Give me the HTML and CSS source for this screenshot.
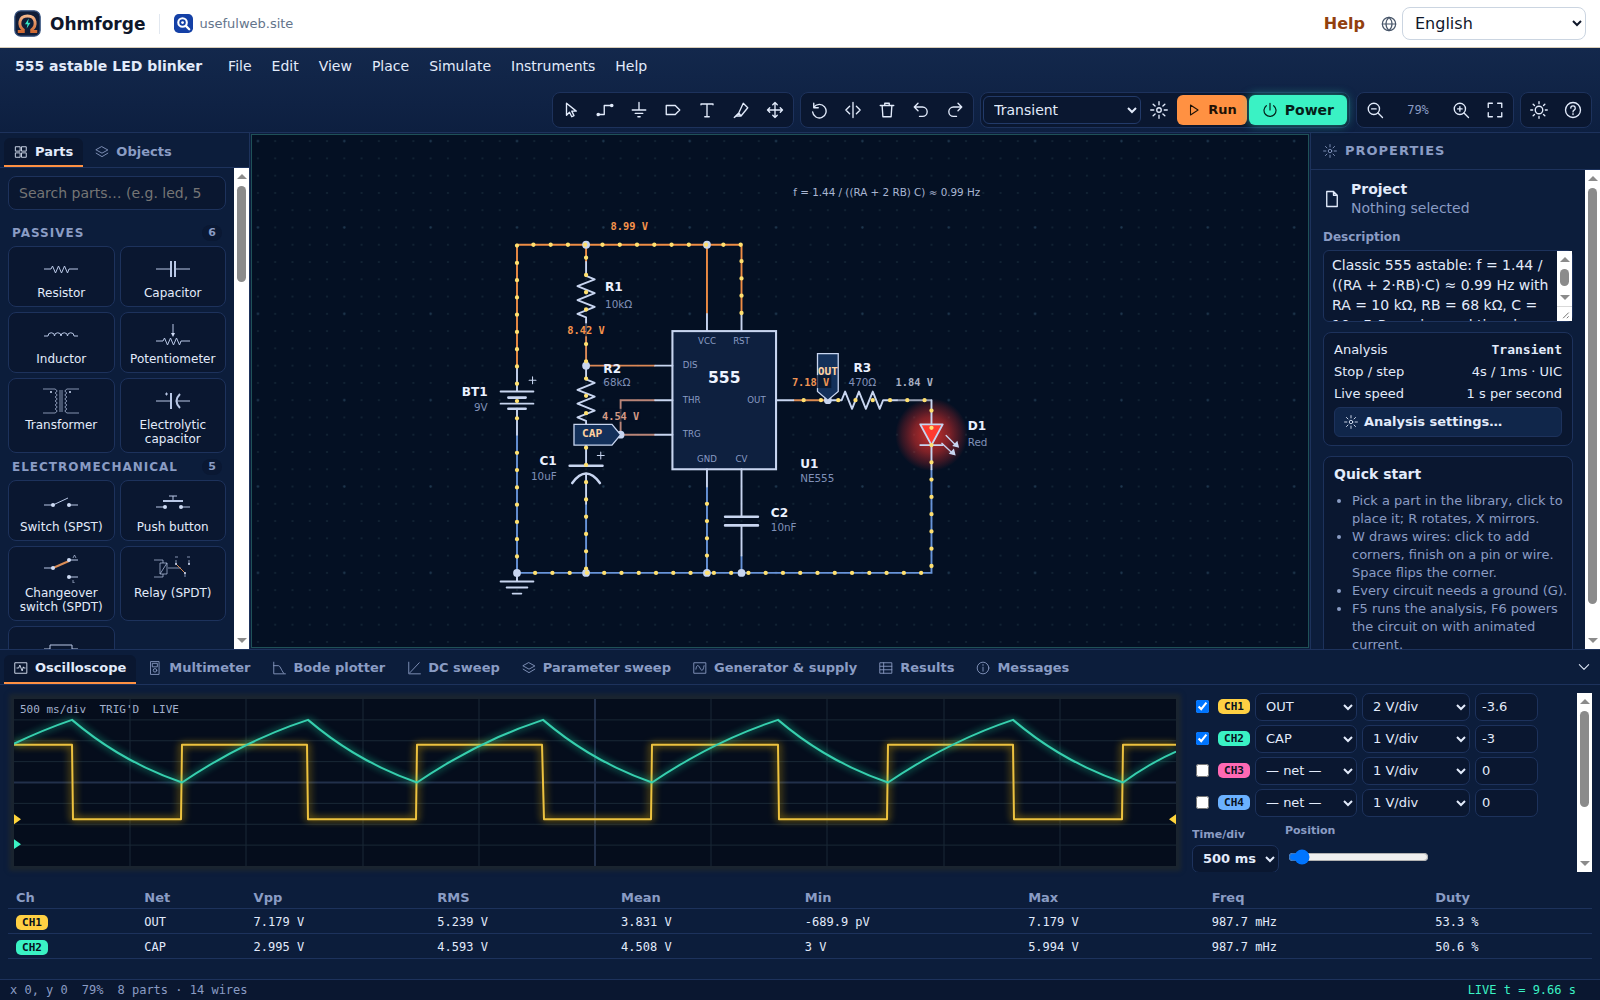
FILE: index.html
```html
<!DOCTYPE html>
<html lang="en">
<head>
<meta charset="utf-8">
<title>Ohmforge</title>
<meta name="viewport" content="width=device-width, initial-scale=1">
<link rel="stylesheet" href="styles.css">
</head>
<body>
<svg class="sprite" aria-hidden="true">
  <symbol id="i-cursor" viewBox="0 0 24 24"><path d="M6 3v16l4-4 3 6 3-1.500-3-6h6z"/></symbol>
  <symbol id="i-wire" viewBox="0 0 24 24"><path d="M3 18h8V6h10"/><circle cx="3" cy="18" r="1.500" class="solid"/><circle cx="21" cy="6" r="1.500" class="solid"/></symbol>
  <symbol id="i-ground" viewBox="0 0 24 24"><path d="M12 2v10M3 12h18M7 16.500h10M10.500 21h3"/></symbol>
  <symbol id="i-label" viewBox="0 0 24 24"><path d="M3 6h12l6 6-6 6H3z"/></symbol>
  <symbol id="i-text" viewBox="0 0 24 24"><path d="M4 5V4h16v1M12 4v17M9 21h6"/></symbol>
  <symbol id="i-probe" viewBox="0 0 24 24"><path d="M15 3l6 6-9 11H6l-3 2 6-6zM9 16l3 4"/></symbol>
  <symbol id="i-move" viewBox="0 0 24 24"><path d="M12 2v20M2 12h20M9 5l3-3 3 3M9 19l3 3 3-3M5 9l-3 3 3 3M19 9l3 3-3 3"/></symbol>
  <symbol id="i-rotate" viewBox="0 0 24 24"><path d="M5 3v6h6M5 8.500a9 9 0 1 1-1.500 6"/></symbol>
  <symbol id="i-mirror" viewBox="0 0 24 24"><path d="M12 2v20M7.500 7l-5 5 5 5M16.500 7l5 5-5 5"/></symbol>
  <symbol id="i-trash" viewBox="0 0 24 24"><path d="M3 6h18M9 6V3h6v3M5.500 6l1 15h11l1-15"/></symbol>
  <symbol id="i-undo" viewBox="0 0 24 24"><path d="M8 3L3 8l5 5M3 8h11a6 6 0 0 1 0 12.500h-4"/></symbol>
  <symbol id="i-redo" viewBox="0 0 24 24"><path d="M16 3l5 5-5 5M21 8H10a6 6 0 0 0 0 12.500h4"/></symbol>
  <symbol id="i-gear" viewBox="0 0 24 24"><circle cx="12" cy="12" r="3"/><path d="M12 1v4M12 19v4M1 12h4M19 12h4M4.200 4.200L6.800 6.800M17.200 17.200l2.600 2.600M4.200 19.800l2.600-2.600M17.200 6.800l2.600-2.600"/></symbol>
  <symbol id="i-sun" viewBox="0 0 24 24"><circle cx="12" cy="12" r="5"/><path d="M12 1v2.500M12 20.500V23M1 12h2.500M20.500 12H23M4.200 4.200L6 6M18 18l1.800 1.800M4.200 19.800L6 18M18 6l1.800-1.800"/></symbol>
  <symbol id="i-play" viewBox="0 0 24 24"><path d="M6 3.500v17l13-8.500z"/></symbol>
  <symbol id="i-power" viewBox="0 0 24 24"><path d="M12 2v10M6.500 5.500a9 9 0 1 0 11 0"/></symbol>
  <symbol id="i-zoomout" viewBox="0 0 24 24"><circle cx="10.500" cy="10.500" r="7.500"/><path d="M16 16l6 6M7.500 10.500h6"/></symbol>
  <symbol id="i-zoomin" viewBox="0 0 24 24"><circle cx="10.500" cy="10.500" r="7.500"/><path d="M16 16l6 6M7.500 10.500h6M10.500 7.500v6"/></symbol>
  <symbol id="i-fit" viewBox="0 0 24 24"><path d="M3 8.500V3h5.500M15.500 3H21v5.500M21 15.500V21h-5.500M8.500 21H3v-5.500"/></symbol>
  <symbol id="i-help" viewBox="0 0 24 24"><circle cx="12" cy="12" r="10"/><path d="M9 9.500a3 3 0 1 1 4.500 2.600c-1 .6-1.500 1.200-1.500 2.400M12 17v1"/></symbol>
  <symbol id="i-globe" viewBox="0 0 24 24"><circle cx="12" cy="12" r="10"/><path d="M2 12h20M12 2c-6 5.500-6 14.500 0 20M12 2c6 5.500 6 14.500 0 20"/></symbol>
  <symbol id="i-grid" viewBox="0 0 24 24"><path d="M3 3h7.500v7.500H3zM13.500 3H21v7.500h-7.500zM3 13.500h7.500V21H3zM13.500 13.500H21V21h-7.500z"/></symbol>
  <symbol id="i-layers" viewBox="0 0 24 24"><path d="M12 3l10 5.500L12 14 2 8.500zM2 14l10 6 10-6"/></symbol>
  <symbol id="i-file" viewBox="0 0 24 24"><path d="M5 2h9l5 5v15H5zM14 2v5h5"/></symbol>
  <symbol id="i-scope" viewBox="0 0 24 24"><path d="M2 3h20v18H2zM5 12h3l2-5 4 10 2-7 1 2h2"/></symbol>
  <symbol id="i-meter" viewBox="0 0 24 24"><path d="M5 1h14v22H5zM8 4h8v6H8z"/><circle cx="12" cy="16" r="3"/></symbol>
  <symbol id="i-bode" viewBox="0 0 24 24"><path d="M3 2v20h20M3 8h8c3 0 4 6 9 13"/></symbol>
  <symbol id="i-sweep" viewBox="0 0 24 24"><path d="M3 2v20h20M5 20L21 3"/></symbol>
  <symbol id="i-wave" viewBox="0 0 24 24"><path d="M2 3h20v18H2zM5 14c1-8 4-8 7-2s5 6 7-4"/></symbol>
  <symbol id="i-table" viewBox="0 0 24 24"><path d="M2 3h20v18H2zM2 9h20M2 15h20M8 3v18"/></symbol>
  <symbol id="i-info" viewBox="0 0 24 24"><circle cx="12" cy="12" r="10"/><path d="M12 10.500v7M12 6v1.500"/></symbol>
  <symbol id="i-down" viewBox="0 0 24 24"><path d="M4 8l8 8 8-8"/></symbol>
</svg>

<header class="site">
  <a class="brand" href="#">
    <svg class="logo" viewBox="0 0 32 32" aria-hidden="true">
      <defs><linearGradient id="omega" x1="0" y1="0" x2="0" y2="1"><stop offset="0" stop-color="#f3b58a"/><stop offset="1" stop-color="#cf6a33"/></linearGradient></defs>
      <rect x="1" y="1" width="30" height="30" rx="7" fill="#101d38" stroke="#36527f" stroke-width="1.500"/>
      <path d="M4.500 25.500h6.500v-2C5 19 5 7 16 7s11 12 5 16.500v2h6.500" fill="none" stroke="url(#omega)" stroke-width="3.500"/>
      <path d="M17.500 10l-4.500 7h3l-1 5 4.500-7h-3z" fill="#37e8c4"/>
    </svg>
    <span>Ohmforge</span>
  </a>
  <a class="parent" href="#">
    <svg class="parent-logo" viewBox="0 0 20 20" aria-hidden="true">
      <rect width="20" height="20" rx="5" fill="#1440a6"/>
      <circle cx="9" cy="9" r="4.500" fill="none" stroke="#fff" stroke-width="2.200"/><circle cx="9" cy="9" r="1.500" fill="#fff"/>
      <path d="M12.500 12.500l3.500 3.500" stroke="#fff" stroke-width="2.400" stroke-linecap="round"/>
    </svg>
    <span>usefulweb.site</span>
  </a>
  <a class="help" href="#">Help</a>
  <label class="lang"><svg class="icon"><use href="#i-globe"/></svg>
    <select aria-label="Language"><option>English</option></select></label>
</header>

<div class="menubar">
  <div class="menu-row">
    <h1>555 astable LED blinker</h1>
    <nav class="menus">
      <button>File</button><button>Edit</button><button>View</button><button>Place</button><button>Simulate</button><button>Instruments</button><button>Help</button>
    </nav>
  </div>
  <div class="tools">
    <div class="group">
      <button class="tool" aria-label="Select"><svg class="icon"><use href="#i-cursor"/></svg></button>
      <button class="tool" aria-label="Wire"><svg class="icon"><use href="#i-wire"/></svg></button>
      <button class="tool" aria-label="Ground"><svg class="icon"><use href="#i-ground"/></svg></button>
      <button class="tool" aria-label="Label"><svg class="icon"><use href="#i-label"/></svg></button>
      <button class="tool" aria-label="Text"><svg class="icon"><use href="#i-text"/></svg></button>
      <button class="tool" aria-label="Probe"><svg class="icon"><use href="#i-probe"/></svg></button>
      <button class="tool" aria-label="Pan"><svg class="icon"><use href="#i-move"/></svg></button>
    </div>
    <div class="group">
      <button class="tool" aria-label="Rotate"><svg class="icon"><use href="#i-rotate"/></svg></button>
      <button class="tool" aria-label="Mirror"><svg class="icon"><use href="#i-mirror"/></svg></button>
      <button class="tool" aria-label="Delete"><svg class="icon"><use href="#i-trash"/></svg></button>
      <button class="tool" aria-label="Undo"><svg class="icon"><use href="#i-undo"/></svg></button>
      <button class="tool" aria-label="Redo"><svg class="icon"><use href="#i-redo"/></svg></button>
    </div>
    <div class="group">
      <select class="analysis" aria-label="Analysis"><option>Transient</option></select>
      <button class="tool" aria-label="Analysis settings"><svg class="icon"><use href="#i-gear"/></svg></button>
      <button class="run"><svg class="icon"><use href="#i-play"/></svg>Run</button>
      <button class="power"><svg class="icon"><use href="#i-power"/></svg>Power</button>
    </div>
    <div class="group">
      <button class="tool" aria-label="Zoom out"><svg class="icon"><use href="#i-zoomout"/></svg></button>
      <output class="zoom">79%</output>
      <button class="tool" aria-label="Zoom in"><svg class="icon"><use href="#i-zoomin"/></svg></button>
      <button class="tool" aria-label="Fit"><svg class="icon"><use href="#i-fit"/></svg></button>
    </div>
    <div class="group">
      <button class="tool" aria-label="Theme"><svg class="icon"><use href="#i-sun"/></svg></button>
      <button class="tool" aria-label="Help"><svg class="icon"><use href="#i-help"/></svg></button>
    </div>
  </div>
</div>

<main class="work">
  <aside class="library">
    <div class="tabs">
      <button class="tab active"><svg class="icon"><use href="#i-grid"/></svg>Parts</button>
      <button class="tab"><svg class="icon"><use href="#i-layers"/></svg>Objects</button>
    </div>
    <div class="scroller">
      <div class="library-list scroll-body">
        <input class="search" type="search" aria-label="Search parts" placeholder="Search parts… (e.g. led, 555)">
        <h2 class="category"><span>Passives</span><span class="count">6</span></h2>
        <div class="cards">
          <button class="card"><svg viewBox="-20 -14 40 28"><path d="M-17 0h7l1.500-3 3 7 3-7 3 7 3-7 3 7 1.500-4h9"/></svg><span>Resistor</span></button>
          <button class="card"><svg viewBox="-20 -14 40 28"><path d="M-17 0h15M2 0h15"/><path class="w" d="M-2-8v16M2-8v16"/></svg><span>Capacitor</span></button>
          <button class="card"><svg viewBox="-20 -14 40 28"><path d="M-17 1h4a3 3 0 0 1 6.500 0a3 3 0 0 1 6.500 0a3 3 0 0 1 6.500 0a3 3 0 0 1 6.500 0h4"/></svg><span>Inductor</span></button>
          <button class="card"><svg viewBox="-20 -14 40 28"><path d="M-17 6h7l1.500-3 3 7 3-7 3 7 3-7 3 7 1.500-4h9M0-11V0"/><path class="f" d="M-2-2h4L0 2z"/></svg><span>Potentiometer</span></button>
          <button class="card"><svg viewBox="-20 -14 40 28"><path class="t" d="M-18-12h12q4 2 0 4q4 2 0 4q4 2 0 4q4 2 0 4q4 2 0 4q4 2 0 4h-12M18-12H6q-4 2 0 4q-4 2 0 4q-4 2 0 4q-4 2 0 4q-4 2 0 4q-4 2 0 4h12"/><path class="core" d="M0-11v22"/><circle class="f" cx="-10" cy="-9" r="1"/><circle class="f" cx="9" cy="-9" r="1"/></svg><span>Transformer</span></button>
          <button class="card"><svg viewBox="-20 -14 40 28"><path d="M-17 0h15M3 0h14M-8-7h3M-6.500-8.500v3"/><path class="w" d="M-2-8v16M7-7q-7 7 0 14"/></svg><span>Electrolytic capacitor</span></button>
        </div>
        <h2 class="category"><span>Electromechanical</span><span class="count">5</span></h2>
        <div class="cards">
          <button class="card"><svg viewBox="-20 -14 40 28"><path d="M-17 2h9M8 2h9M-8 2L7-5"/><circle class="f" cx="-8" cy="2" r="2"/><circle class="f" cx="8" cy="2" r="2"/></svg><span>Switch (SPST)</span></button>
          <button class="card"><svg viewBox="-20 -14 40 28"><path d="M-17 4h9M8 4h9M-4-7h8M0-7v5"/><path class="w" d="M-10-2h20"/><circle class="f" cx="-8" cy="4" r="2"/><circle class="f" cx="8" cy="4" r="2"/></svg><span>Push button</span></button>
          <button class="card"><svg viewBox="-20 -14 40 28"><path d="M-17-1h9M8-9h9M8 8h9"/><path class="hot" d="M-8-1L8-8"/><circle class="f" cx="-8" cy="-1" r="2"/><circle class="f" cx="8" cy="-9" r="2"/><circle class="f" cx="8" cy="8" r="2"/><path class="t" d="M12-11l1.500-3 1.500 3M12 11v3h2"/></svg><span>Changeover switch (SPDT)</span></button>
          <button class="card"><svg viewBox="-20 -14 40 28"><path class="t" d="M-19-9h9v3M-19 8h9V5M-13-6h7V5h-7zM-13 5l7-11M-5-1H8M12 4v4M3-9v4M16-9v4M2-12h3M14-12h3"/><path class="hot thin" d="M3-5l9 9"/><circle class="f" cx="3" cy="-5" r="1"/><circle class="f" cx="16" cy="-5" r="1"/><circle class="f" cx="12" cy="4" r="1"/></svg><span>Relay (SPDT)</span></button>
          <button class="card" aria-label="Fuse"><svg viewBox="-20 -14 40 28"><path d="M-17 0h6M11 0h6M-11-4h22v8h-22z"/></svg></button>
        </div>
      </div>
      <div class="sbar" aria-hidden="true"><i class="up"></i><i class="thumb t-library"></i><i class="down"></i></div>
    </div>
  </aside>

  <section class="canvas" aria-label="Schematic">
    <svg class="sheet" viewBox="252 135 1056 512" preserveAspectRatio="xMidYMid slice">
      <defs>
        <pattern id="minor" patternUnits="userSpaceOnUse" x="-10" y="-10" width="20" height="20"><circle cx="10" cy="10" r="1.200" fill="#132636"/></pattern>
        <pattern id="major" patternUnits="userSpaceOnUse" x="-50" y="-70" width="100" height="100"><circle cx="50" cy="50" r="1.300" fill="#1e3750"/></pattern>
        <radialGradient id="glow"><stop offset="0" stop-color="#ff3b30" stop-opacity=".8"/><stop offset=".5" stop-color="#e0302c" stop-opacity=".55"/><stop offset=".8" stop-color="#d02a2a" stop-opacity=".25"/><stop offset="1" stop-color="#d02a2a" stop-opacity="0"/></radialGradient>
      </defs>
      <g transform="translate(517 245) scale(.8635)">
        <rect x="-600" y="-400" width="2000" height="1200" fill="url(#minor)"/>
        <rect x="-600" y="-400" width="2000" height="1200" fill="url(#major)"/>
        <circle cx="480" cy="220" r="42" fill="url(#glow)"/>

        <g class="net">
          <path class="v9" d="M0 140V0H260V80M220 0V80M80 0V20"/>
          <path class="v8" d="M80 100V140H160"/>
          <path class="v4" d="M160 180H120V220M80 220H160"/>
          <path class="v7" d="M320 180H360"/>
          <path class="v2" d="M440 180H480"/>
          <path class="v0" d="M0 220V380H480V260M80 300V380M220 280V380M260 360V380"/>
        </g>
        <rect class="chip" x="180" y="100" width="120" height="160"/>
        <g class="part">
          <path d="M0 140V170M0 190V220M-19 170H19M-19 184H19"/><path class="thick" d="M-10 177H10M-10 190H10"/>
          <path d="M80 20V36L90 40 70 48 90 56 70 64 90 72 70 80 80 84V100"/>
          <path d="M80 140V156L90 160 70 168 90 176 70 184 90 192 70 200 80 204V220"/>
          <path d="M80 220V256M80 265V300"/><path class="thick" d="M61 256H99M64 276Q80 254 96 276"/>
          <path d="M220 80V100M260 80V100M160 140H180M160 180H180M160 220H180M300 180H320M220 260V280M260 260V315M260 325V360"/>
          <path class="thick" d="M241 315H279M241 325H279"/>
          <path d="M360 180H376L380 170 388 190 396 170 404 190 412 170 420 190 424 180H440"/>
          <path d="M480 180V208M480 232V260"/>
          <path class="led" d="M467 208H493L480 232Z"/><path d="M467 232H493"/>
          <path class="ray" d="M497 221L509 233M492 230L505 242"/>
          <path class="tip" d="M512 235l-8-2 6-6zM508 244l-8-2 6-6z"/>
          <path d="M0 380V390M-19 390H19M-12 397H12M-5 404H5"/>
          <path class="thin" d="M14 157H22M18 153V161M93 244H101M97 240V248"/>
        </g>
        <g class="junction"><circle cx="80" r="4.500"/><circle cx="220" r="4.500"/><circle cx="80" cy="140" r="4.500"/><circle cx="120" cy="220" r="4.500"/><circle cx="360" cy="180" r="4.500"/><circle cy="380" r="4.500"/><circle cx="80" cy="380" r="4.500"/><circle cx="220" cy="380" r="4.500"/><circle cx="260" cy="380" r="4.500"/></g>
        <g class="flow">
          <path d="M0 1V202M0 241V380M19 0H260M80 15V90M80 115V202M80 235V376M260 19V80M220 300V381M21 380H222M228 380H469M480 192V373M332 180H473"/>
        </g>
        <g class="port"><path d="M66 208H110L120 220 110 232H66Z"/><path d="M348 126H372V170L360 180 348 170Z"/><text x="87" y="223">CAP</text><text x="360" y="151">OUT</text></g>

        <g class="pin"><text x="220" y="115">VCC</text><text x="260" y="115">RST</text><text x="220" y="252">GND</text><text x="260" y="252">CV</text><text class="s" x="192" y="143">DIS</text><text class="s" x="192" y="183">THR</text><text class="s" x="192" y="223">TRG</text><text class="e" x="288" y="183">OUT</text></g>
        <text class="ic" x="240" y="160">555</text>
        <g class="ref"><text x="102" y="54">R1</text><text x="100" y="148">R2</text><text class="e" x="-34" y="175">BT1</text><text class="e" x="46" y="255">C1</text><text x="294" y="315">C2</text><text class="m" x="400" y="147">R3</text><text x="522" y="215">D1</text><text x="328" y="258">U1</text></g>
        <g class="val"><text x="102" y="73">10kΩ</text><text x="100" y="164">68kΩ</text><text class="e" x="-34" y="192">9V</text><text class="e" x="46" y="272">10uF</text><text x="294" y="332">10nF</text><text class="m" x="400" y="163">470Ω</text><text x="522" y="233">Red</text><text x="328" y="275">NE555</text><text class="note" x="320" y="-57">f = 1.44 / ((RA + 2 RB) C) ≈ 0.99 Hz</text></g>
        <g class="volt">
          <rect x="57" y="91" width="46" height="15"/><rect x="97" y="190" width="46" height="15"/><rect x="317" y="151" width="47" height="15"/>
          <text class="v9" x="130" y="-17">8.99 V</text><text class="v9" x="80" y="103">8.42 V</text><text class="v4" x="120" y="203">4.54 V</text><text class="v7" x="340" y="163">7.18 V</text><text class="v2" x="460" y="163">1.84 V</text>
        </g>
      </g>
    </svg>
  </section>

  <aside class="props">
    <h2 class="props-title"><svg class="icon"><use href="#i-gear"/></svg>Properties</h2>
    <div class="scroller">
    <div class="props-list scroll-body">
      <div class="subject">
        <svg class="icon"><use href="#i-file"/></svg>
        <div><strong>Project</strong><p>Nothing selected</p></div>
      </div>
      <label class="desc" for="desc">Description</label>
      <div class="textbox">
        <textarea id="desc">Classic 555 astable: f = 1.44 / ((RA + 2·RB)·C) ≈ 0.99 Hz with RA = 10 kΩ, RB = 68 kΩ, C = 10 uF. Powering and time in live mode blinks the LED once per second.</textarea>
        <div class="sbar over" aria-hidden="true"><i class="up"></i><i class="thumb t-text"></i><i class="down"></i><svg class="grip" viewBox="0 0 15 15"><path d="M6 12l6-6M10 12l2-2"/></svg></div>
      </div>
      <section class="box">
        <dl>
          <div><dt>Analysis</dt><dd class="mono">Transient</dd></div>
          <div><dt>Stop / step</dt><dd>4s / 1ms · UIC</dd></div>
          <div><dt>Live speed</dt><dd>1 s per second</dd></div>
        </dl>
        <button class="settings"><svg class="icon"><use href="#i-gear"/></svg>Analysis settings…</button>
      </section>
      <section class="box quick">
        <h3>Quick start</h3>
        <ul>
          <li>Pick a part in the library, click to place it; R rotates, X mirrors.</li>
          <li>W draws wires: click to add corners, finish on a pin or wire. Space flips the corner.</li>
          <li>Every circuit needs a ground (G).</li>
          <li>F5 runs the analysis, F6 powers the circuit on with animated current.</li>
        </ul>
      </section>
    </div>
    <div class="sbar" aria-hidden="true"><i class="up"></i><i class="thumb t-props"></i><i class="down"></i></div>
    </div>
  </aside>
</main>

<section class="dock">
  <div class="tabs">
    <button class="tab active"><svg class="icon"><use href="#i-scope"/></svg>Oscilloscope</button>
    <button class="tab"><svg class="icon"><use href="#i-meter"/></svg>Multimeter</button>
    <button class="tab"><svg class="icon"><use href="#i-bode"/></svg>Bode plotter</button>
    <button class="tab"><svg class="icon"><use href="#i-sweep"/></svg>DC sweep</button>
    <button class="tab"><svg class="icon"><use href="#i-layers"/></svg>Parameter sweep</button>
    <button class="tab"><svg class="icon"><use href="#i-wave"/></svg>Generator &amp; supply</button>
    <button class="tab"><svg class="icon"><use href="#i-table"/></svg>Results</button>
    <button class="tab"><svg class="icon"><use href="#i-info"/></svg>Messages</button>
    <button class="collapse" aria-label="Collapse"><svg class="icon"><use href="#i-down"/></svg></button>
  </div>
  <div class="instrument">
    <div class="scope">
      <svg viewBox="0 0 1162 168" preserveAspectRatio="none">
        <path class="grat" d="M116 0V168M232 0V168M349 0V168M465 0V168M697 0V168M813 0V168M930 0V168M1046 0V168M0 21H1162M0 42H1162M0 63H1162M0 105H1162M0 126H1162M0 147H1162"/>
        <path class="grat axis" d="M581 0V168M0 84H1162"/>
        <path class="trace ch1" d="M0 46H58L59 121H167L168 46H293L294 121H402L403 46H528L530 121H637L638 46H764L765 121H873L874 46H999L1000 121H1108L1109 46H1162"/>
        <path class="trace ch2" d="M0 45Q29 31 58 21Q107 63 168 84Q230 42 294 21Q343 63 403 84Q465 42 529 21Q578 63 638 84Q700 42 764 21Q813 63 874 84Q936 42 999 21Q1048 63 1109 84Q1135 65 1162 53"/>
        <path class="mark1" d="M0 116l7 5-7 5zM1162 116l-7 5 7 5z"/><path class="mark2" d="M0 141l7 5-7 5z"/>
      </svg>
      <span class="readout">500 ms/div  TRIG'D  LIVE</span>
    </div>
    <div class="controls scroller">
      <div class="scroll-body">
      <div class="channel"><input type="checkbox" checked aria-label="Show CH1"><span class="chip1 badge">CH1</span><select aria-label="CH1 net"><option>OUT</option></select><select aria-label="CH1 scale"><option>2 V/div</option></select><input type="text" value="-3.6" aria-label="CH1 offset"></div>
      <div class="channel"><input type="checkbox" checked aria-label="Show CH2"><span class="chip2 badge">CH2</span><select aria-label="CH2 net"><option>CAP</option></select><select aria-label="CH2 scale"><option>1 V/div</option></select><input type="text" value="-3" aria-label="CH2 offset"></div>
      <div class="channel"><input type="checkbox" aria-label="Show CH3"><span class="chip3 badge">CH3</span><select aria-label="CH3 net"><option>— net —</option></select><select aria-label="CH3 scale"><option>1 V/div</option></select><input type="text" value="0" aria-label="CH3 offset"></div>
      <div class="channel"><input type="checkbox" aria-label="Show CH4"><span class="chip4 badge">CH4</span><select aria-label="CH4 net"><option>— net —</option></select><select aria-label="CH4 scale"><option>1 V/div</option></select><input type="text" value="0" aria-label="CH4 offset"></div>
      <div class="timebase">
        <label class="field">Time/div<select><option>500 ms</option></select></label>
        <label class="field pos">Position<input type="range" min="0" max="100" value="5"></label>
      </div>
      </div>
      <div class="sbar" aria-hidden="true"><i class="up"></i><i class="thumb t-controls"></i><i class="down"></i></div>
    </div>
  </div>
  <table class="measures">
    <colgroup><col class="c-ch"><col class="c-net"><col class="c-n"><col class="c-n"><col class="c-n"><col class="c-w"><col class="c-n"><col class="c-w"><col></colgroup>
    <thead><tr><th>Ch</th><th>Net</th><th>Vpp</th><th>RMS</th><th>Mean</th><th>Min</th><th>Max</th><th>Freq</th><th>Duty</th></tr></thead>
    <tbody>
      <tr><td><span class="chip1 badge">CH1</span></td><td>OUT</td><td>7.179 V</td><td>5.239 V</td><td>3.831 V</td><td>-689.9 pV</td><td>7.179 V</td><td>987.7 mHz</td><td>53.3 %</td></tr>
      <tr><td><span class="chip2 badge">CH2</span></td><td>CAP</td><td>2.995 V</td><td>4.593 V</td><td>4.508 V</td><td>3 V</td><td>5.994 V</td><td>987.7 mHz</td><td>50.6 %</td></tr>
    </tbody>
  </table>
</section>

<footer class="status"><span>x 0, y 0</span><span>79%</span><span>8 parts · 14 wires</span><span class="live">LIVE t = 9.66 s</span></footer>
</body>
</html>
```

FILE: styles.css
```css
:root {
  --panel: #0c1d3b;
  --deep: #0a1730;
  --line: #1d325c;
  --text: #e2ebfb;
  --muted: #8a9cc4;
  --accent: #ff9142;
  --live: #3af2c4;
  --mono: "DejaVu Sans Mono", monospace;
}
* { box-sizing: border-box; }
body {
  margin: 0;
  height: 100vh;
  display: flex;
  flex-direction: column;
  overflow: hidden;
  background: var(--panel);
  color: var(--text);
  font: 14px/20px "DejaVu Sans", sans-serif;
}
button, input, select, textarea { font: inherit; color: inherit; margin: 0; }
button { background: none; border: 0; padding: 0; }
a { color: inherit; text-decoration: none; }
h1, h2, h3, p, dl, dd, ul { margin: 0; }
.sprite { display: none; }
.icon {
  width: 18px;
  height: 18px;
  flex: none;
  fill: none;
  stroke: currentColor;
  stroke-width: 1.8;
  stroke-linejoin: round;
  stroke-linecap: round;
}
.solid { fill: currentColor; }

/* scroll areas */
.scroller { display: flex; flex: 1; min-height: 0; }
.scroll-body { flex: 1; min-width: 0; overflow: hidden; }
.sbar { display: flex; flex-direction: column; align-items: center; width: 15px; flex: none; background: #fff; }
.up, .down { border: 5px solid transparent; flex: none; }
.up { border-top-width: 0; border-bottom-color: #8b8b8b; margin: 6px 0 7px; }
.down { border-bottom-width: 0; border-top-color: #8b8b8b; margin: auto 0 6px; }
.thumb { width: 9px; border-radius: 5px; background: #8b8b8b; }
.t-library { height: 20%; }
.t-props { height: 87%; }
.t-controls { height: 54%; }
.t-text { height: 17px; }

/* site header */
.site {
  display: flex;
  align-items: center;
  height: 48px;
  flex: none;
  padding: 0 14px;
  background: #fff;
  border-bottom: 1px solid #d9cdb8;
  color: #64748b;
}
.brand { display: flex; align-items: center; gap: 9px; font-size: 17px; font-weight: 700; color: #0f172a; padding-right: 14px; }
.logo { width: 27px; height: 27px; }
.parent { display: flex; align-items: center; gap: 6px; border-left: 1px solid #e2e8f0; padding-left: 14px; font-size: 13px; }
.parent-logo { width: 19px; height: 19px; }
.help { margin-left: auto; font-size: 16px; font-weight: 700; color: #92400e; }
.lang { display: flex; align-items: center; gap: 5px; margin-left: 16px; color: #475569; }
.lang .icon { width: 16px; height: 16px; }
.lang select { width: 184px; height: 33px; padding: 0 8px; background: #fff; border: 1px solid #cbd5e1; border-radius: 8px; font-size: 16px; color: #0f172a; }

/* menu and tools */
.menubar { flex: none; padding: 4px 8px; background: linear-gradient(#13284c, #0d1f40); border-bottom: 1px solid var(--line); }
.menu-row { display: flex; align-items: center; height: 28px; padding-left: 7px; gap: 16px; }
.menu-row h1 { font-size: 14px; }
.menus { display: flex; }
.menus button { padding: 0 10px; height: 28px; }
.tools { display: flex; justify-content: flex-end; flex-wrap: wrap; gap: 6px; margin-top: 12px; }
.group { display: flex; align-items: center; gap: 2px; height: 36px; padding: 2px; background: var(--deep); border: 1px solid var(--line); border-radius: 8px; }
.tool { display: grid; place-items: center; width: 32px; height: 30px; }
.analysis { width: 158px; height: 28px; padding: 0 6px; background: var(--deep); border: 1px solid #223a69; border-radius: 6px; }
.run, .power { display: flex; align-items: center; height: 30px; border-radius: 6px; font-weight: 700; color: #1f1206; background: #ff9142; }
.run { gap: 7px; padding: 0 10px; font-size: 13px; }
.power { gap: 7px; padding: 0 13px; background: var(--live); color: #052019; box-shadow: 0 0 10px #37e8c488; }
.run .icon, .power .icon { width: 14px; height: 14px; }
.power .icon { width: 16px; height: 16px; }
.zoom { width: 50px; text-align: center; font: 12px/20px var(--mono); color: var(--muted); }

/* tabs */
.tabs { display: flex; flex: none; gap: 2px; height: 35px; padding: 5px 4px 0; border-bottom: 1px solid var(--line); }
.tab { display: flex; align-items: center; gap: 7px; padding: 0 10px; font-size: 13px; font-weight: 700; color: var(--muted); border-bottom: 2px solid transparent; border-radius: 6px 6px 0 0; }
.tab .icon, .props-title .icon, .settings .icon { width: 14px; height: 14px; stroke-width: 1.5; }
.tab.active { background: var(--deep); color: var(--text); border-bottom-color: var(--accent); }

/* workspace */
.work { display: flex; flex: 1; min-height: 0; }
.library { display: flex; flex-direction: column; width: 250px; flex: none; border-right: 1px solid var(--line); }
.library-list { padding: 8px 8px 0; }
.search { display: block; width: 100%; height: 34px; padding: 0 10px; background: var(--deep); border: 1px solid var(--line); border-radius: 8px; margin-bottom: 9px; appearance: none; }
.search::placeholder { color: #757575; }
.category { display: flex; justify-content: space-between; align-items: center; height: 27px; padding: 0 4px; font-size: 12px; letter-spacing: 1px; text-transform: uppercase; color: var(--muted); }
.count { width: 20px; text-align: center; font-size: 11px; line-height: 16px; letter-spacing: 0; background: #0a1833; border-radius: 8px; }
.cards { display: grid; grid-template-columns: 1fr 1fr; gap: 5px; }
.card { display: flex; flex-direction: column; align-items: center; gap: 3px; min-height: 61px; padding: 8px 4px 6px; background: var(--deep); border: 1px solid var(--line); border-radius: 8px; font-size: 12px; line-height: 14px; }
.card svg { width: 40px; height: 28px; fill: none; stroke: #b9c8e6; stroke-width: 1; flex: none; }
.card .w { stroke-width: 2; }
.card .t { stroke-width: 1; opacity: .7; }
.card .core { stroke-width: 4; opacity: .35; }
.card .f { fill: #cfdcf5; stroke: none; }
.card .hot { stroke: #d98c55; stroke-width: 2; }
.card .hot.thin { stroke-width: 1; }

/* schematic */
.canvas { flex: 1; min-width: 0; margin: 1px; background: #041023; border: 1px solid #1f5158; }
.sheet { display: block; width: 100%; height: 100%; font-size: 12px; }
.sheet .net path { fill: none; stroke-width: 2.2; }
.net .v9 { stroke: #ef8d45; }
.net .v8 { stroke: #dc8856; }
.net .v7 { stroke: #dc8a50; }
.net .v4 { stroke: #b98578; }
.net .v2 { stroke: #98a0b4; }
.net .v0 { stroke: #6793d8; }
.chip { fill: #0e203f; stroke: #c8d5f0; stroke-width: 2.4; }
.part path { fill: none; stroke: #c8d5f0; stroke-width: 2.2; stroke-linejoin: round; stroke-linecap: round; }
.part .thick { stroke-width: 3; }
.part .thin { stroke-width: 1.2; }
.part .ray { stroke-width: 1.6; }
.part .led { fill: #ff3b30; }
.part .tip { fill: #c8d5f0; stroke: none; }
.junction { fill: #c8d5f0; }
.flow path { fill: none; stroke: #ffe070; stroke-width: 5; stroke-linecap: round; stroke-dasharray: 0 20; }
.port path { fill: #13305a; stroke: #c8d5f0; stroke-width: 1.5; }
.port text { fill: #ffd0a0; font: 700 13px var(--mono); text-anchor: middle; }
.pin text { fill: #8a9cc4; font-size: 10px; text-anchor: middle; }
.sheet text.s { text-anchor: start; }
.sheet text.m { text-anchor: middle; }
.sheet text.e { text-anchor: end; }
.ic { fill: #eef4ff; font-size: 18px; font-weight: 700; text-anchor: middle; }
.ref { fill: #eaf1ff; font-size: 14px; font-weight: 700; }
.val { fill: #8091b8; }
.note { fill: #a9b6d2; }
.volt { font: 700 12px var(--mono); text-anchor: middle; }
.volt rect { fill: #041023; opacity: .7; }
.volt .v9 { fill: #f7944c; }
.volt .v7 { fill: #ef9453; }
.volt .v4 { fill: #d59a86; }
.volt .v2 { fill: #a8b0c4; }

/* properties */
.props { display: flex; flex-direction: column; width: 290px; flex: none; border-left: 1px solid var(--line); }
.props-title { display: flex; align-items: center; gap: 8px; height: 37px; flex: none; padding: 0 12px; font-size: 13px; letter-spacing: 1px; text-transform: uppercase; color: var(--muted); border-bottom: 1px solid var(--line); }
.props-list { padding: 10px 12px 0; }
.subject { display: flex; align-items: center; gap: 10px; padding-bottom: 9px; }
.subject div { line-height: 19px; }
.subject p { color: var(--muted); }
.desc { display: block; font-size: 12px; font-weight: 700; color: var(--muted); }
.textbox { position: relative; margin: 3px 0 10px; }
.textbox textarea { display: block; width: 100%; height: 72px; padding: 4px 23px 0 8px; background: var(--deep); border: 1px solid var(--line); border-radius: 6px; overflow: hidden; resize: none; }
.over { position: absolute; top: 1px; right: 1px; bottom: 1px; }
.grip { width: 15px; height: 15px; flex: none; border-top: 1px solid #d9d9d9; fill: none; stroke: #6b6b6b; }
.box { padding: 6px 10px 8px; margin-bottom: 10px; background: var(--deep); border: 1px solid var(--line); border-radius: 8px; }
.box dl div { display: flex; justify-content: space-between; font-size: 13px; line-height: 22px; }
.box .mono { font-family: var(--mono); font-weight: 700; }
.settings { display: flex; align-items: center; gap: 6px; width: 100%; height: 30px; margin-top: 2px; padding: 0 9px; background: #10264a; border: 1px solid var(--line); border-radius: 6px; font-size: 13px; font-weight: 700; }
.quick { padding-top: 7px; padding-right: 2px; }
.quick h3 { font-size: 14px; }
.quick ul { margin-top: 8px; padding-left: 18px; font-size: 13px; line-height: 18px; color: var(--muted); }

/* instrument dock */
.dock { flex: none; border-top: 1px solid var(--line); }
.collapse { margin-left: auto; padding: 0 5px; }
.collapse .icon { width: 14px; height: 14px; }
.instrument { display: flex; gap: 12px; padding: 8px 8px 0; height: 187px; }
.scope { position: relative; flex: 1; min-width: 0; margin: 6px 4px 6px 6px; background: #050d1c; box-shadow: 0 0 4px 5px #1b2530; }
.scope svg { display: block; width: 100%; height: 100%; }
.readout { position: absolute; left: 6px; top: 3px; font: 11px/16px var(--mono); white-space: pre; color: #a3b1cd; }
.grat { fill: none; stroke: #1a2836; stroke-width: 1; }
.axis { stroke: #22304b; stroke-width: 2; }
.trace { fill: none; stroke-width: 2; stroke-linejoin: round; }
.ch1 { stroke: #edc23f; filter: drop-shadow(0 0 4px #ffc400); }
.ch2 { stroke: #37cfae; filter: drop-shadow(0 0 4px #16d0a0); }
.mark1 { fill: #ffd43b; }
.mark2 { fill: var(--live); }
.controls { width: 400px; flex: none; font-size: 13px; }
.channel { display: grid; grid-template-columns: 21px 32px 102px 108px 63px; gap: 5px; align-items: center; height: 28px; margin-bottom: 4px; }
.channel input[type="checkbox"] { width: 13px; height: 13px; margin-left: 4px; }
.channel select, .channel input[type="text"], .field select { width: 100%; height: 28px; background: var(--deep); border: 1px solid var(--line); border-radius: 7px; padding: 0 6px; }
.badge { display: inline-block; width: 32px; border-radius: 5px; font: 700 11px/15px var(--mono); text-align: center; color: #08131f; }
.chip1 { background: #ffd043; }
.chip2 { background: var(--live); }
.chip3 { background: #ff69b4; }
.chip4 { background: #6bb1ff; }
.timebase { display: flex; gap: 6px; }
.field { display: block; font-size: 11px; line-height: 16px; font-weight: 700; color: var(--muted); padding-top: 6px; }
.field select { display: block; width: 87px; margin-top: 2px; font-size: 13px; color: var(--text); }
.field.pos { padding-top: 2px; }
.pos input { display: block; width: 141px; margin: 10px 3px 0; }
.measures { width: calc(100% - 16px); margin: 12px 8px 20px; border-collapse: collapse; table-layout: fixed; font-size: 13px; }
.measures th, .measures td { height: 25px; padding: 2px 8px 0; text-align: left; line-height: 16px; border-bottom: 1px solid var(--line); }
.measures th { padding-top: 4px; color: var(--muted); }
.measures td { font: 12px/16px var(--mono); }
.c-ch { width: 8.1%; }
.c-net { width: 6.9%; }
.c-n { width: 11.6%; }
.c-w { width: 14.1%; }

.status { display: flex; gap: 14px; flex: none; height: 21px; padding: 0 10px; align-items: center; background: var(--deep); border-top: 1px solid var(--line); font: 12px/20px var(--mono); color: var(--muted); }
.live { margin-left: auto; padding-right: 14px; color: var(--live); }
```
